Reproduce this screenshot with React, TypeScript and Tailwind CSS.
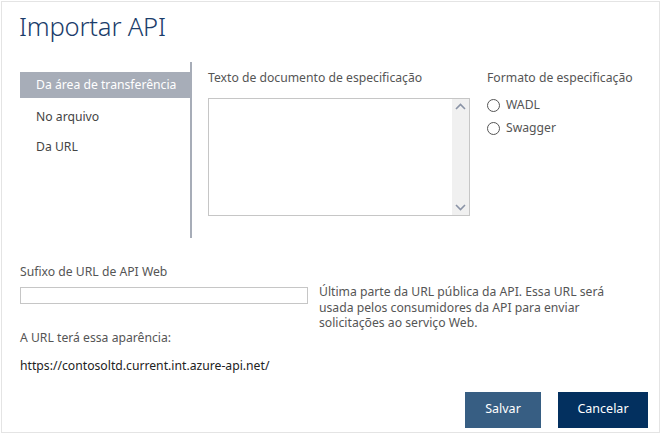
import React from "react";

const navItems = ["Da área de transferência", "No arquivo", "Da URL"];

function Radio({ label }: { label: string }) {
  return (
    <label className="flex items-center gap-[6px] h-[23px]">
      <span className="w-[13px] h-[13px] rounded-full border border-[#555] bg-white" />
      <span>{label}</span>
    </label>
  );
}

export default function App() {
  return (
    <div
      className="w-[661px] h-[434px] bg-white p-px text-[12.2px] text-[#555]"
      style={{ fontFamily: '"Noto Sans", "Open Sans", sans-serif' }}
    >
      <div className="h-full border border-[#e4e4e4] flex flex-col px-[18px]">
        <h1 className="text-[25.6px] font-light text-[#1b3d6b] leading-none mt-[12px] h-[34px] ml-[-1px] tracking-[-0.2px]">
          Importar API
        </h1>

        <div className="flex mt-[14px]">
          <nav className="w-[172px] h-[176px] border-r-2 border-[#a7adb8] pt-[10px]">
            {navItems.map((item, i) => (
              <div
                key={item}
                className={
                  i === 0
                    ? "h-[26px] flex items-center pl-[16px] bg-[#a7adb8] text-white mb-[4px] whitespace-nowrap"
                    : "h-[30px] flex items-center pl-[16px] text-[#444]"
                }
              >
                {item}
              </div>
            ))}
          </nav>

          <div className="ml-[16px] w-[262px] pt-[6px]">
            <div className="h-[30px] leading-[20px] whitespace-nowrap">Texto de documento de especificação</div>
            <div className="h-[118px] border border-[#c6c6c6] flex justify-end">
              <div className="w-[17px] h-full bg-[#f0f0f0] flex flex-col items-center justify-between py-[4px]">
                <svg width="11" height="7" viewBox="0 0 11 7">
                  <path d="M1 6 L5.5 1.5 L10 6" fill="none" stroke="#8a93a6" strokeWidth="1.6" />
                </svg>
                <svg width="11" height="7" viewBox="0 0 11 7">
                  <path d="M1 1 L5.5 5.5 L10 1" fill="none" stroke="#8a93a6" strokeWidth="1.6" />
                </svg>
              </div>
            </div>
          </div>

          <div className="ml-[17px] pt-[6px] whitespace-nowrap">
            <div className="h-[20px] leading-[20px] mb-[6px]">Formato de especificação</div>
            <Radio label="WADL" />
            <Radio label="Swagger" />
          </div>
        </div>

        <div className="mt-[24px] leading-[20px]">Sufixo de URL de API Web</div>
        <div className="flex mt-[5px]">
          <div className="w-[288px] h-[17px] border border-[#c6c6c6]" />
          <p className="ml-[11px] w-[310px] leading-[15.5px] mt-[-3px]">
            Última parte da URL pública da API. Essa URL será usada pelos consumidores da API para enviar
            solicitações ao serviço Web.
          </p>
        </div>
        <div className="mt-[-3px] leading-[20px]">A URL terá essa aparência:</div>
        <div className="mt-[8px] leading-[20px] text-[#222]">https://contosoltd.current.int.azure-api.net/</div>

        <div className="flex justify-end gap-[17px] mt-[16px] mr-[-7px]">
          <button className="w-[76px] h-[36px] bg-[#375e83] text-white text-[12.5px]">Salvar</button>
          <button className="w-[90px] h-[36px] bg-[#03305f] text-white text-[12.5px]">Cancelar</button>
        </div>
      </div>
    </div>
  );
}
